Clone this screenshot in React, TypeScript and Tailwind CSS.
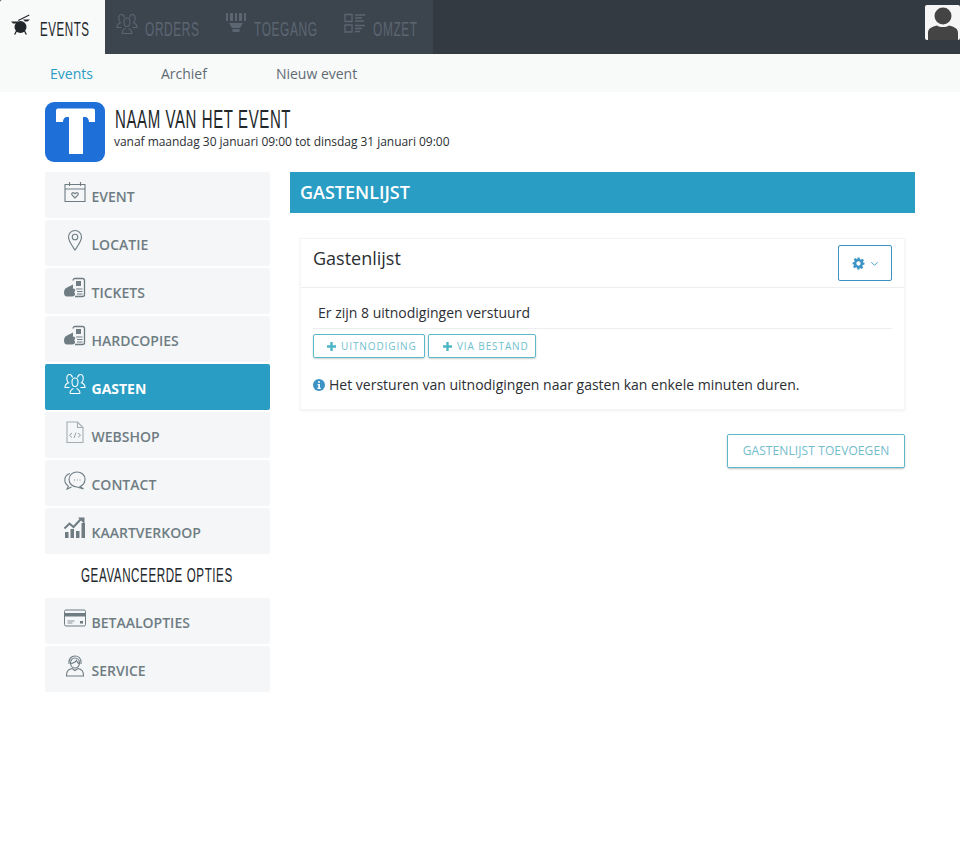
import type { ReactNode } from "react";

const sans = "font-['Open_Sans',sans-serif]";

/* Oswald isn't installed, so the condensed headings are Liberation Sans squeezed on x */
function Cond({ w, className = "", children }: { w: string; className?: string; children: ReactNode }) {
  return (
    <span className={`${w} block whitespace-nowrap font-['Liberation_Sans',sans-serif]`}>
      <span className={`inline-block origin-left tracking-[1px] ${className}`}>{children}</span>
    </span>
  );
}

/* ── Line icons for the sidebar ─────────────────────────────── */
function Ico({ children, className = "" }: { children: ReactNode; className?: string }) {
  return (
    <svg viewBox="0 0 22 22" className={`w-[22px] h-[22px] shrink-0 ${className}`} fill="none" stroke="currentColor" strokeWidth="1.1">
      {children}
    </svg>
  );
}

const CalendarIcon = () => (
  <Ico>
    <path d="M1 3.5h20v17H1zM1 8h20M5.5 1v4M16.5 1v4" />
    <path d="M11 17l-3-3c-1-1.5.5-3 2-2l1 .8 1-.8c1.5-1 3 .5 2 2z" />
  </Ico>
);
const PinIcon = () => (
  <Ico>
    <path d="M11 21C7 15 4.5 12 4.5 8a6.5 6.5 0 0 1 13 0c0 4-2.500 7-6.500 13z" />
    <circle cx="11" cy="8" r="2.8" />
  </Ico>
);
const TicketIcon = () => (
  <Ico>
    <path d="M9 3.5a2 2 0 0 1 2-2h7.5a2 2 0 0 1 2 2v14a2 2 0 0 1-2 2H11" strokeWidth="1.3" />
    <rect x="12" y="4" width="5" height="5" fill="currentColor" stroke="none" />
    <path d="M12 12h6.5M13 14.5h5.5M13 17h5.5" strokeWidth="1.2" />
    <path d="M9 7.5L3 10.5C1 11.5 0 13 0 15.5s1 4 3 4h5c2 0 3-1 3-2.500 0-1-.5-1.500-1-2 1-.5 1.500-1.500 1-2.500-.5-1-1.500-1.300-2.500-1L9 11z" fill="currentColor" stroke="none" />
  </Ico>
);
const PeopleIcon = () => (
  <Ico>
    <path d="M11 13.5c-1.800 0-3-2-3-4.500S9.200 5 11 5s3 1.500 3 4-1.200 4.500-3 4.500zM6 20.5c0-3 1-4 3.500-5M16 20.5c0-3-1-4-3.500-5M6 20.5h10" />
    <path d="M8.5 4.5C8 2.500 6.800 1.500 5.500 1.500 3.800 1.500 2.800 3 2.800 5.500c0 2 .8 3.500 1.700 4.200C2.300 10.500 1 11.500 1 14.500h4.500" />
    <path d="M13.5 4.500c.5-2 1.700-3 3-3 1.700 0 2.700 1.500 2.700 4 0 2-.8 3.500-1.700 4.200 2.200.8 3.500 1.800 3.500 4.800h-4.500" />
  </Ico>
);
const FileIcon = () => (
  <Ico>
    <path d="M3 1h10.5l5.500 5.500V21.500H3zM13.500 1v5.500H19" className="opacity-60" />
    <path d="M8 12l-2.500 2.200L8 16.500M14 12l2.500 2.200L14 16.500M12 11.500l-2 5.500" strokeWidth="0.7" />
  </Ico>
);
const ChatIcon = () => (
  <Ico>
    <path d="M4.500 17C2 15.500.8 13.500.8 11c0-3 2-5.500 5-6.500M4.500 17l-1.500 3 4.500-2" />
    <path d="M13 3c4.500 0 8 3 8 7s-2.500 6.500-5 7.500l3.500 2.500-6.500-2C8.500 18 5 14.500 5 10.500 5 6 8.500 3 13 3z" />
    <path d="M10 11h.8M12.800 11h.8M15.600 11h.8" />
  </Ico>
);
const ChartIcon = () => (
  <svg viewBox="0 0 22 22" className="w-[22px] h-[22px] shrink-0" fill="currentColor">
    <path d="M.5 11.500l5-5 4 3.500 7-7.500" fill="none" stroke="currentColor" strokeWidth="2" />
    <path d="M14 .5h6.500V7zM1 15h3.500v6H1zM6.500 12h3.500v9H6.500zM12 14h3.500v7H12zM17.500 6h3.500v15h-3.500z" />
  </svg>
);
const CardIcon = () => (
  <svg viewBox="0 0 22 22" className="w-[22px] h-[22px] shrink-0">
    <rect x="0.5" y="3" width="21" height="16" rx="1.5" fill="none" stroke="currentColor" />
    <path d="M1 6h20v3.500H1z" fill="currentColor" />
    <path d="M3.500 14h7M3.500 16h5" stroke="currentColor" fill="none" strokeWidth="0.8" />
    <rect x="16" y="14" width="3" height="2.500" fill="currentColor" />
  </svg>
);
const AgentIcon = () => (
  <Ico>
    <path d="M11 13c-2.500 0-4.500-2-4.500-5S8.500 3 11 3s4.500 2 4.500 5-2 5-4.500 5z" />
    <path d="M5 9V7.500C5 3.500 7.500 1 11 1s6 2.500 6 6.500V9M6.500 9c2.500-1 5-1.500 6-3.500 .5 1.500 1.500 2.500 3 3.500" />
    <path d="M8 13.500C3.500 14.500 2.500 16.500 2.500 21h17c0-4.500-1-6.500-5.500-7.500L11 15.500z" />
  </Ico>
);

const items = [
  { label: "EVENT", icon: <CalendarIcon /> },
  { label: "LOCATIE", icon: <PinIcon /> },
  { label: "TICKETS", icon: <TicketIcon /> },
  { label: "HARDCOPIES", icon: <TicketIcon /> },
  { label: "GASTEN", icon: <PeopleIcon />, active: true },
  { label: "WEBSHOP", icon: <FileIcon /> },
  { label: "CONTACT", icon: <ChatIcon /> },
  { label: "KAARTVERKOOP", icon: <ChartIcon /> },
];
const advanced = [
  { label: "BETAALOPTIES", icon: <CardIcon /> },
  { label: "SERVICE", icon: <AgentIcon /> },
];

function SideItem({ label, icon, active }: { label: string; icon: ReactNode; active?: boolean }) {
  return (
    <div
      className={`h-[46px] flex pl-[19px] rounded-[2px] ${
        active ? "bg-[#2a9dc4] text-white" : "bg-[#f4f6f8] text-[#6f7d83]"
      }`}
    >
      <div className="pt-[9px]">{icon}</div>
      <span className={`ml-[5.5px] pt-[15px] text-[14px] leading-[20px] ${active ? "font-bold" : "font-semibold"}`}>
        {label}
      </span>
    </div>
  );
}

/* ── Top bar icons ─────────────────────────────────────────── */
const DrumIcon = () => (
  <svg viewBox="0 0 22 22" className="w-[22px] h-[22px] text-[#22272b]" fill="currentColor">
    <path d="M1 8.500h7.500L6 10.500H3zM13 6.500h7l-2.500 2h-2.500z" />
    <path d="M8 7l11-5.500.5 1L8.500 8z" />
    <circle cx="10.500" cy="14" r="6" />
    <path d="M4 21.500l2.500-5 1 .5-2 4.500zM17 21.500l-2.500-5-1 .5 2 4.500z" />
  </svg>
);
const TurnstileIcon = () => (
  <svg viewBox="0 0 22 22" className="w-[22px] h-[22px]" fill="currentColor">
    <path d="M1 0h2v8H1zM5 0h3v8H5zM10 0h2v8h-2zM14 0h3v8h-3zM19 0h2v8h-2zM4 10h14l-3 5H7zM7.500 16h7v3h-7z" />
  </svg>
);
const RevenueIcon = () => (
  <svg viewBox="0 0 22 22" className="w-[22px] h-[22px]" fill="none" stroke="currentColor" strokeWidth="1.3">
    <path d="M1 1.500h7V8.500H1zM1 12h7v7H1zM11 2h10M11 5h7M11 8h9M11 12.500h10M11 15.500h7M11 18.500h5" />
  </svg>
);

function TopTab({ label, icon, tabW, textW }: { label: string; icon: ReactNode; tabW: string; textW: string }) {
  return (
    <div className={`${tabW} flex pl-[11px] text-[#5b6672]`}>
      <div className="pt-[13px]">{icon}</div>
      <div className="ml-[7px] pt-[15px]">
        <Cond w={textW} className="text-[21px] leading-[28px] scale-x-[0.57]">
          {label}
        </Cond>
      </div>
    </div>
  );
}

function SmallBtn({ w, pad, label }: { w: string; pad: string; label: string }) {
  return (
    <button
      className={`${w} ${pad} h-[24px] border border-[#5bb9c9] rounded-[2px] shadow-[0_1px_2px_rgba(0,0,0,0.2)] flex items-center gap-[5px] text-[10px] tracking-[0.9px] font-medium text-[#6fc0cf]`}
    >
      <svg viewBox="0 0 9 9" className="w-[9px] h-[9px] text-[#4db6c6]" fill="currentColor">
        <path d="M3.300 0h2.400v3.300H9v2.400H5.700V9H3.300V5.700H0V3.300h3.300z" />
      </svg>
      {label}
    </button>
  );
}

export default function App() {
  return (
    <div className={`${sans} min-h-[866px] bg-white text-[#2b2f33]`}>
      {/* Top bar */}
      <header className="h-[54px] bg-[#333a42] flex items-start justify-between">
        <div className="flex">
          <div className="w-[105px] h-[54px] bg-[#f8f9f9] flex pl-[10px] rounded-tl-[2px]">
            <div className="pt-[13px]">
              <DrumIcon />
            </div>
            <div className="ml-[8px] pt-[15px] text-[#22272b]">
              <Cond w="w-[49px]" className="text-[21px] leading-[28px] scale-x-[0.55]">
                EVENTS
              </Cond>
            </div>
          </div>
          <div className="h-[54px] w-[328px] bg-[#3c444e] flex">
            <TopTab label="ORDERS" tabW="w-[109px]" textW="w-[54px]" icon={<PeopleIcon />} />
            <TopTab label="TOEGANG" tabW="w-[119px]" textW="w-[62px]" icon={<TurnstileIcon />} />
            <TopTab label="OMZET" tabW="w-[100px]" textW="w-[45px]" icon={<RevenueIcon />} />
          </div>
        </div>
        <div className="mt-[5px] w-[35px] h-[35px] bg-[#f6f6f6] rounded-[2px] overflow-hidden">
          <svg viewBox="0 0 35 35" className="w-[35px] h-[35px] text-[#444]" fill="currentColor">
            <circle cx="18" cy="11" r="8.5" />
            <path d="M3 35v-7c0-5 4-6 9-7.500 3 2 9 2 12 0 5 1.500 9 2.500 9 7.500v7z" />
          </svg>
        </div>
      </header>

      {/* Sub nav */}
      <nav className="h-[38px] bg-[#f8f9f9] flex items-center text-[14px] text-[#5f6b73]">
        <span className="ml-[50px] text-[#2a9dc4]">Events</span>
        <span className="ml-[68px]">Archief</span>
        <span className="ml-[69px]">Nieuw event</span>
      </nav>

      <div className="pl-[45px] pr-[45px]">
        {/* Event title */}
        <div className="flex pt-[10px]">
          <svg viewBox="0 0 60 60" className="w-[60px] h-[60px] shrink-0">
            <rect width="60" height="60" rx="9" fill="#1f6fd8" />
            <path d="M13 6.500h35a2 2 0 0 1 2 2V20h-6c0-3-1.500-5-4-5h-2v37H24V15h-2c-2.500 0-4 2-4 5h-7V8.500a2 2 0 0 1 2-2z" fill="#fff" />
          </svg>
          <div className="ml-[10px]">
            <div className="pt-[1px] text-[#22272b]">
              <Cond w="w-[176px]" className="text-[25px] leading-[32px] scale-x-[0.6]">
                NAAM VAN HET EVENT
              </Cond>
            </div>
            <p className="-ml-[1px] -mt-[2px] text-[12px] leading-[18px] tracking-[-0.035px] text-[#2b2f33]">
              vanaf maandag 30 januari 09:00 tot dinsdag 31 januari 09:00
            </p>
          </div>
        </div>

        <div className="flex pt-[10px]">
          {/* Sidebar */}
          <aside className="w-[225px] shrink-0 flex flex-col gap-[2px]">
            {items.map((it) => (
              <SideItem key={it.label} {...it} />
            ))}
            <div className="h-[40px] pl-[36px] pt-[5px] text-[#22272b]">
              <Cond w="w-[152px]" className="text-[20px] leading-[28px] scale-x-[0.58]">
                GEAVANCEERDE OPTIES
              </Cond>
            </div>
            {advanced.map((it) => (
              <SideItem key={it.label} {...it} />
            ))}
          </aside>

          {/* Main */}
          <main className="ml-[20px] flex-1 min-w-0">
            <div className="h-[41px] bg-[#2a9dc4] flex items-center pl-[10px] text-[18px] font-semibold text-white">
              GASTENLIJST
            </div>
            <div className="px-[10px] pt-[25px]">
              <section className="border border-[#f4f5f6] shadow-[0_1px_3px_rgba(0,0,0,0.06)] h-[172px]">
                <div className="h-[49px] border-b border-[#eceef0] flex justify-between pl-[12px] pr-[12px]">
                  <span className="text-[18px] leading-[24px] pt-[7px]">Gastenlijst</span>
                  <button className="mt-[6px] w-[54px] h-[36px] border border-[#3d93c4] rounded-[2px] flex items-center justify-center gap-[5px] text-[#3d93c4]">
                    <svg viewBox="0 0 24 24" className="w-[13px] h-[13px]" fill="currentColor">
                      <path fillRule="evenodd" d="M10 1h4l.6 3.200 1.900.8 2.700-1.800 2.800 2.800-1.800 2.700.8 1.900L23 10v4l-3.200.6-.8 1.900 1.800 2.700-2.800 2.800-2.700-1.800-1.900.8L14 23h-4l-.6-3.200-1.900-.8-2.700 1.800-2.800-2.800 1.800-2.700-.8-1.900L1 14v-4l3.200-.6.8-1.900L3.200 4.800 6 2l2.700 1.800 1.900-.8zM12 8a4 4 0 1 0 0 8 4 4 0 0 0 0-8z" />
                    </svg>
                    <svg viewBox="0 0 10 10" className="w-[9px] h-[9px]" fill="none" stroke="currentColor">
                      <path d="M1.500 3.500L5 7l3.500-3.500" />
                    </svg>
                  </button>
                </div>
                <div className="px-[12px]">
                  <div className="h-[41px] border-b border-[#eceef0] pl-[5px] pt-[15px] text-[14px] leading-[20px]">
                    Er zijn 8 uitnodigingen verstuurd
                  </div>
                  <div className="flex gap-[3px] pt-[5px]">
                    <SmallBtn w="w-[112px]" pad="pl-[13px]" label="UITNODIGING" />
                    <SmallBtn w="w-[108px]" pad="pl-[14px]" label="VIA BESTAND" />
                  </div>
                  <div className="flex items-center pt-[17px] text-[14px] leading-[20px]">
                    <svg viewBox="0 0 12 12" className="w-[12px] h-[12px] mr-[4px] shrink-0">
                      <circle cx="6" cy="6" r="6" fill="#3d93c4" />
                      <path d="M5 2.200h2v1.600H5zM4.600 5h2.400v3.800h.8V10H4.400V8.800h.9V6.200h-.7z" fill="#fff" />
                    </svg>
                    Het versturen van uitnodigingen naar gasten kan enkele minuten duren.
                  </div>
                </div>
              </section>
              <div className="flex justify-end pt-[24px]">
                <button className="h-[34px] w-[178px] border border-[#5bb9c9] rounded-[2px] shadow-[0_1px_2px_rgba(0,0,0,0.25)] text-[12px] tracking-[0.1px] font-medium text-[#72bccb]">
                  GASTENLIJST TOEVOEGEN
                </button>
              </div>
            </div>
          </main>
        </div>
      </div>
    </div>
  );
}
